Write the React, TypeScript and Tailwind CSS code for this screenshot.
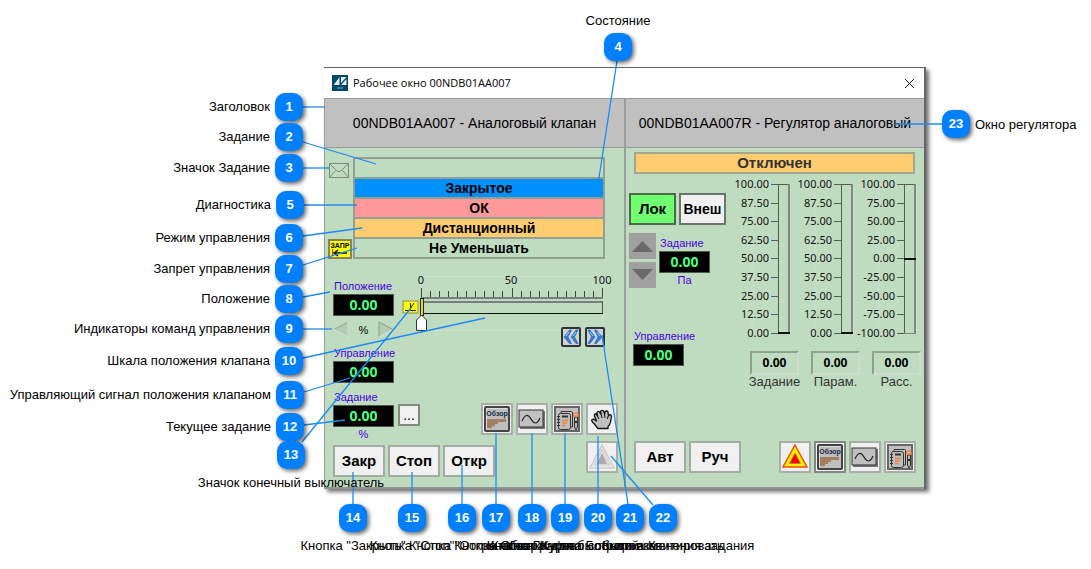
import type { ReactNode } from "react";
import { X } from "lucide-react";

type Side = "left" | "right" | "top" | "bottom";

interface Callout {
  n: number;
  x: number;
  y: number;
  text: string;
  side: Side;
  line: [number, number, number, number];
}

const callouts: Callout[] = [
  { n: 1, x: 289, y: 107, text: "Заголовок", side: "left", line: [303, 107, 325, 107] },
  { n: 2, x: 289, y: 137, text: "Задание", side: "left", line: [303, 142, 376, 164] },
  { n: 3, x: 289, y: 168, text: "Значок Задание", side: "left", line: [303, 168, 329, 168] },
  { n: 4, x: 618, y: 47, text: "Состояние", side: "top", line: [617, 61, 598, 184] },
  { n: 5, x: 290, y: 205, text: "Диагностика", side: "left", line: [304, 205, 357, 205] },
  { n: 6, x: 289, y: 238, text: "Режим управления", side: "left", line: [303, 236, 362, 228] },
  { n: 7, x: 289, y: 269, text: "Запрет управления", side: "left", line: [303, 265, 357, 248] },
  { n: 8, x: 289, y: 299, text: "Положение", side: "left", line: [303, 297, 330, 292] },
  { n: 9, x: 289, y: 329, text: "Индикаторы команд управления", side: "left", line: [303, 329, 332, 329] },
  { n: 10, x: 289, y: 361, text: "Шкала положения клапана", side: "left", line: [303, 358, 485, 318] },
  { n: 11, x: 290, y: 395, text: "Управляющий сигнал положения клапаном", side: "left", line: [304, 392, 350, 378] },
  { n: 12, x: 290, y: 427, text: "Текущее задание", side: "left", line: [304, 425, 345, 420] },
  { n: 13, x: 291, y: 455, text: "Значок конечный выключатель", side: "bottom", line: [302, 442, 411, 308] },
  { n: 14, x: 353, y: 518, text: 'Кнопка "Закрыть"', side: "bottom", line: [353, 504, 353, 472] },
  { n: 15, x: 412, y: 518, text: 'Кнопка "Стоп"', side: "bottom", line: [412, 504, 412, 472] },
  { n: 16, x: 462, y: 518, text: 'Кнопка "Открыть"', side: "bottom", line: [462, 504, 462, 465] },
  { n: 17, x: 496, y: 518, text: "Кнопка Обзор", side: "bottom", line: [496, 504, 496, 433] },
  { n: 18, x: 532, y: 518, text: "Кнопка График", side: "bottom", line: [532, 504, 532, 433] },
  { n: 19, x: 565, y: 518, text: "Кнопка Журнал событий", side: "bottom", line: [565, 504, 565, 433] },
  { n: 20, x: 598, y: 518, text: "Кнопка Блокировка", side: "bottom", line: [598, 504, 598, 436] },
  { n: 21, x: 630, y: 518, text: "Кнопки для быстрого изменения задания", side: "bottom", line: [628, 504, 602, 335] },
  { n: 22, x: 663, y: 518, text: "Кнопка Квитировать", side: "bottom", line: [653, 505, 611, 456] },
  { n: 23, x: 956, y: 124, text: "Окно регулятора", side: "right", line: [942, 124, 895, 124] },
];

const labelSide: Record<Side, string> = {
  left: "right-full mr-[5px] top-[6px]",
  right: "left-full ml-[5px] top-[7px]",
  top: "left-1/2 -translate-x-1/2 bottom-full mb-1",
  bottom: "left-1/2 -translate-x-1/2 top-full mt-1.5",
};

function Callouts() {
  return (
    <>
      <svg className="pointer-events-none absolute left-0 top-0" width="1091" height="569">
        {callouts.map(({ n, line: [x1, y1, x2, y2] }) => (
          <line key={n} x1={x1} y1={y1} x2={x2} y2={y2} stroke="#1c8af5" strokeWidth="1.3" />
        ))}
      </svg>
      {callouts.map((c) => (
        <div key={c.n} className="absolute h-7 w-7" style={{ left: c.x - 14, top: c.y - 14 }}>
          <span className="flex h-7 w-7 items-center justify-center rounded-[10px] bg-[#0080ff] text-[13px] font-bold text-white shadow-[2px_2px_4px_rgba(0,0,0,0.6)]">
            {c.n}
          </span>
          <span className={`absolute whitespace-nowrap text-[13px] leading-4 text-black ${labelSide[c.side]}`}>
            {c.text}
          </span>
        </div>
      ))}
    </>
  );
}

function Readout({ id, label, unit, wide }: { id: string; label: string; unit?: string; wide?: boolean }) {
  return (
    <div className={`flex flex-col ${wide ? "w-[61px]" : "w-[51px]"}`}>
      <label htmlFor={id} className="whitespace-nowrap pl-px text-[11px] leading-[14px] text-[#4a00e0]">
        {label}
      </label>
      <output
        id={id}
        className="mt-px flex h-[22px] items-center justify-center border border-[#4c5a4c] bg-black font-['Noto_Sans',sans-serif] text-sm font-bold text-[#4dff7c]"
      >
        0.00
      </output>
      {unit && <span className="text-center text-[11px] leading-[14px] text-[#4a00e0]">{unit}</span>}
    </div>
  );
}

function TextButton({ children }: { children: ReactNode }) {
  return (
    <button className="h-8 w-[52px] border-2 border-[#a3aba3] bg-[#f0f0f0] text-[15px] font-bold text-black">
      {children}
    </button>
  );
}

function IconButton({ label, active, children }: { label: string; active?: boolean; children: ReactNode }) {
  return (
    <button
      aria-label={label}
      className={`flex h-8 w-8 items-center justify-center border-2 bg-[#f0f0f0] ${active ? "border-[#858585]" : "border-[#a9aea9]"}`}
    >
      {children}
    </button>
  );
}

function OverviewIcon() {
  return (
    <svg width="28" height="28" viewBox="0 0 28 28">
      <rect x="2" y="2" width="24" height="24" rx="1" fill="#bebebe" stroke="#444" strokeWidth="2" />
      <path d="M3.5 24V3.5H24" fill="none" stroke="#ddd" />
      <text x="14" y="11" textAnchor="middle" fontSize="7" fontWeight="bold" fill="#132c42" fontFamily="Liberation Sans, sans-serif">
        Обзор
      </text>
      <path d="M4 14h19v3h-8v2h-3v2H9v2H4z" fill="#a47e60" />
    </svg>
  );
}

function TrendIcon() {
  return (
    <svg width="28" height="28" viewBox="0 0 28 28">
      <rect x="2" y="6" width="25" height="18" fill="#777" />
      <rect x="1" y="5" width="24" height="17" fill="#c0c0c0" stroke="#333" />
      <path d="M4 16C7 9 10 9 13 14s6 6 9-1" fill="none" stroke="#222" strokeWidth="1.2" />
    </svg>
  );
}

function JournalIcon() {
  return (
    <svg width="28" height="28" viewBox="0 0 28 28">
      <rect x="2" y="2" width="24" height="24" fill="#c0c0c0" stroke="#666" strokeWidth="2" />
      <rect x="5.500" y="8.500" width="12" height="16" rx="2" fill="#bdbdbd" stroke="#333" />
      <path d="M8 8V6.500h10.500q1 0 1 1V22H18" fill="none" stroke="#333" />
      <path d="M4 11.500h3M4 14.500h3M4 17.500h3M4 20.500h3" stroke="#333" />
      <path d="M9 11.500h6" stroke="#333" strokeWidth="2" />
      <path d="M9 15.500h6M9 18h5M9 20.500h3" stroke="#f58238" strokeWidth="1.300" />
      <path d="M21.500 12v10l1.500 3 1.500-3V12z" fill="#bbb" stroke="#333" />
      <path d="M21 17h4" stroke="#333" strokeWidth="2" />
      <path d="M20.500 11V9q2.500-2 4.500 0v2z" fill="#ccc" stroke="#f58238" strokeWidth="1.300" />
    </svg>
  );
}

function HandIcon() {
  return (
    <svg width="28" height="28" viewBox="0 0 28 28">
      <path
        d="M10 23.500L6 18.500Q3 16 4 14.500q2-1 4.500 1.500L6.500 11q-.5-2.500 1.500-2l1.500 2L9 8q.5-2.500 2.500-1L13 9l-.5-2.500q1-2 3-.5l1 3 .5-2q1.500-2 3 0l.5 4 .5-1q2-1 2.500 1.500L22.500 17q-.5 3-2.500 4.500v2z"
        fill="#c0c0c0"
        stroke="#111"
        strokeWidth="1.300"
        strokeLinejoin="round"
      />
      <path d="M9.500 11l1.500 3M13 9l1 4M16.500 9l.5 4M20 11l-.5 3" stroke="#111" fill="none" />
    </svg>
  );
}

function AlarmIcon({ muted }: { muted?: boolean }) {
  return muted ? (
    <svg width="28" height="28" viewBox="0 0 28 28">
      <path d="M14 2L26 25H2z" fill="#ececec" stroke="#ccc" strokeWidth="1.500" />
      <path d="M14 6L22 22H6z" fill="#dedede" stroke="#ccc" />
      <path d="M14 10L19 21H9z" fill="#aaa" />
    </svg>
  ) : (
    <svg width="28" height="28" viewBox="0 0 28 28">
      <path d="M14 2L26 24H2z" fill="#fff200" stroke="#f44a14" strokeWidth="1.500" />
      <path d="M14 10L19.500 20.500h-11z" fill="#f00" stroke="#b87333" strokeWidth="0.700" />
    </svg>
  );
}

function ChevronButton({ label, flip }: { label: string; flip?: boolean }) {
  return (
    <button aria-label={label} className="h-5 w-5 rounded-xs border-2 border-[#30343a] bg-[#d2d2d2]">
      <svg width="16" height="16" viewBox="0 0 16 16" className={flip ? "-scale-x-100" : ""}>
        <path d="M6.500 1h2L5 8l3.500 6.500h-2L1 8zM13 1h2l-3.500 7 3.500 6.500h-2L8 8z" fill="#2f7fd8" stroke="#1c5caf" strokeWidth="0.600" />
        <path d="M6 3L3 7M13 3l-3 4" stroke="#9fd2ff" />
      </svg>
    </button>
  );
}

function ValveScale() {
  const ticks = Array.from({ length: 21 }, (_, i) => i);
  return (
    <svg width="212" height="62" viewBox="0 0 212 62" className="block font-['Noto_Sans',sans-serif]">
      <path d="M20 5.500h181V59.500H20z" fill="none" stroke="#d0dfd0" />
      <g fontSize="11" textAnchor="middle" fill="#111">
        <text x="19" y="13">0</text>
        <text x="109" y="13">50</text>
        <text x="200" y="13">100</text>
      </g>
      {ticks.map((i) => (
        <line
          key={i}
          x1={Math.round(19 + i * 9.05) + 0.5}
          x2={Math.round(19 + i * 9.05) + 0.5}
          y1={i % 10 === 0 ? 17 : 20}
          y2="27"
          stroke="#3c4a3c"
          strokeWidth="1"
        />
      ))}
      <path d="M19 27H201" stroke="#77807a" strokeWidth="2" />
      <path d="M19 31H201" stroke="#77807a" strokeWidth="2" />
      <path d="M200.500 30V43" stroke="#555" />
      <path d="M19 42.500H201" stroke="#111" />
      <rect x="18.500" y="27.500" width="3" height="17" fill="#e8e000" stroke="#222" />
      <path d="M14.500 59.500V49L19.500 44l5 5v10.500z" fill="#fff" stroke="#333" />
      <rect x="1" y="30" width="15" height="12" fill="#ff0" stroke="#8c8c50" />
      <path d="M3 39.500h4L12 32M8.500 32v7.500H14" fill="none" stroke="#222" />
    </svg>
  );
}

function Gauge({ marks }: { marks: string[] }) {
  const bipolar = marks[8].startsWith("-");
  return (
    <svg width="61" height="164" viewBox="0 0 61 164" className="block overflow-visible font-['Noto_Sans',sans-serif]">
      <path d="M22 7.500H60.500V156.500H22z" fill="none" stroke="#cfdccf" />
      {marks.map((m, i) => (
        <g key={m}>
          <text x="39" y={11 + Math.round(i * 18.6)} textAnchor="end" fontSize="11" fill="#111">
            {m}
          </text>
          <line x1="41" x2="49" y1={7.5 + Math.round(i * 18.6)} y2={7.5 + Math.round(i * 18.6)} stroke="#526052" />
        </g>
      ))}
      <path d="M48.500 156V7.500H59" fill="none" stroke="#526052" />
      <path d="M59 7V157" stroke="#7d8a7d" strokeWidth="2" />
      <path d={bipolar ? "M48 82H60" : "M48 156H60"} stroke="#111" strokeWidth="2" />
      {bipolar && <path d="M48 156.500H60" stroke="#7d8a7d" />}
    </svg>
  );
}

const percentMarks = ["100.00", "87.50", "75.00", "62.50", "50.00", "37.50", "25.00", "12.50", "0.00"];
const errorMarks = ["100.00", "75.00", "50.00", "25.00", "0.00", "-25.00", "-50.00", "-75.00", "-100.00"];

const statusRows = [
  { text: "", color: "" },
  { text: "Закрытое", color: "bg-[#0091ff]" },
  { text: "ОК", color: "bg-[#ff9999]" },
  { text: "Дистанционный", color: "bg-[#ffcc70]" },
  { text: "Не Уменьшать", color: "" },
];

function ValvePanel() {
  return (
    <section className="flex flex-col border-l border-[#999f99]">
      <h2 className="flex h-[50px] items-center justify-center border-y border-[#999] bg-[#c0c0c0] text-sm">
        00NDB01AA007 - Аналоговый клапан
      </h2>
      <div className="flex pl-[3px] pr-[19px] pt-[9px]">
        <div className="flex w-[25px] flex-col justify-between pt-[5px]">
          <svg width="22" height="17" viewBox="0 0 22 17" className="block">
            <path d="M1.500 1.500h19v14h-19zM1.500 1.500l7 7q2.500 2.500 5 0l7-7M1.500 15.500l6-7M20.500 15.500l-6-7" fill="none" stroke="#7f8b7f" />
          </svg>
          <svg width="24" height="20" viewBox="0 0 24 20" className="block">
            <rect x="1" y="1" width="22" height="18" fill="#ff0" stroke="#85855a" strokeWidth="2" />
            <text x="12" y="9" textAnchor="middle" fontSize="7" fontWeight="bold" fontFamily="Liberation Sans, sans-serif">
              ЗАПР
            </text>
            <path d="M4.500 10v7" stroke="#e02020" />
            <path d="M6 14h13M10 11l-4 3 4 3" fill="none" stroke="#111" strokeWidth="1.500" />
          </svg>
        </div>
        <ul className="flex-1 border-x-2 border-b-2 border-[#92a092]">
          {statusRows.map((row, i) => (
            <li key={i} className={`h-5 border-t-2 border-[#92a092] text-center text-sm font-bold leading-[18px] ${row.color}`}>
              {row.text}
            </li>
          ))}
        </ul>
      </div>
      <div className="flex justify-between pl-2 pr-[10px]">
        <div className="flex flex-col gap-2 pt-5">
          <div>
            <Readout id="position" label="Положение" wide />
            <div className="flex items-center justify-between pt-[5px] text-[11px] leading-4">
              <svg width="16" height="17" viewBox="0 0 16 17">
                <path d="M15 1v15L1 8.500z" fill="#b2ceb2" stroke="#93a793" />
                <path d="M1 8.500L15 16V1" fill="none" stroke="#e8f0e8" />
              </svg>
              %
              <svg width="16" height="17" viewBox="0 0 16 17">
                <path d="M1 1v15L15 8.500z" fill="#b2ceb2" stroke="#8a9c8a" />
                <path d="M1 16L15 8.500" fill="none" stroke="#e8f0e8" />
              </svg>
            </div>
          </div>
          <Readout id="control" label="Управление" wide />
        </div>
        <div className="flex flex-col items-end pt-3">
          <ValveScale />
          <div className="-mt-1.5 flex gap-1 pr-[9px]">
            <ChevronButton label="Быстро уменьшить" />
            <ChevronButton label="Быстро увеличить" flip />
          </div>
        </div>
      </div>
      <div className="flex items-start justify-between pl-2 pr-1.5 pt-[7px]">
        <div className="flex items-start gap-1">
          <Readout id="task" label="Задание" unit="%" wide />
          <button className="mt-[14px] h-[22px] w-[22px] border-2 border-[#828a82] bg-[#f0f0f0] text-sm leading-4">...</button>
        </div>
        <div className="flex gap-[3px] pt-[13px]">
          <IconButton label="Обзор"><OverviewIcon /></IconButton>
          <IconButton label="График"><TrendIcon /></IconButton>
          <IconButton label="Журнал"><JournalIcon /></IconButton>
          <IconButton label="Блокировка"><HandIcon /></IconButton>
        </div>
      </div>
      <div className="flex items-end justify-between pl-2 pr-1.5">
        <div className="-mb-1 flex gap-[3px]">
          <TextButton>Закр</TextButton>
          <TextButton>Стоп</TextButton>
          <TextButton>Откр</TextButton>
        </div>
        <IconButton label="Квитировать"><AlarmIcon muted /></IconButton>
      </div>
    </section>
  );
}

function RegulatorPanel() {
  return (
    <section className="flex flex-col border-l-2 border-[#999f99]">
      <h2 className="flex h-[50px] items-center justify-center border-y border-[#999] bg-[#c0c0c0] text-sm whitespace-nowrap">
        00NDB01AA007R - Регулятор аналоговый
      </h2>
      <p className="ml-2 mr-[9px] mt-1 h-[22px] border-2 border-[#a3a890] bg-[#ffcc70] text-center text-[15px] font-bold leading-[18px] text-[#333]">
        Отключен
      </p>
      <div className="flex justify-between pr-[7px]">
        <div className="flex flex-col pl-[3px] pt-[19px]">
          <div className="flex gap-[3px]">
            <button className="h-8 w-[47px] border-2 border-[#4b6b4b] bg-[#70ff70] text-[15px] font-bold">Лок</button>
            <button className="h-8 w-[47px] border-2 border-[#6c756c] bg-[#f0f0f0] text-sm font-bold">Внеш</button>
          </div>
          <div className="flex gap-[3px] pt-2">
            <div className="flex flex-col gap-[3px]">
              <button aria-label="Увеличить задание" className="flex h-[26px] w-[27px] items-center justify-center bg-[#a0a0a0]">
                <svg width="21" height="12" viewBox="0 0 21 12"><path d="M0 12L10.500 1 21 12z" fill="#696969" /></svg>
              </button>
              <button aria-label="Уменьшить задание" className="flex h-[26px] w-[27px] items-center justify-center bg-[#a0a0a0]">
                <svg width="21" height="12" viewBox="0 0 21 12"><path d="M0 0h21L10.500 11z" fill="#696969" /></svg>
              </button>
            </div>
            <div className="pt-[3px]">
              <Readout id="reg-task" label="Задание" unit="Па" />
            </div>
          </div>
          <div className="pl-1 pt-[41px]">
            <Readout id="reg-control" label="Управление" />
          </div>
        </div>
        <div className="flex gap-[2px] pt-[3px]">
          <Gauge marks={percentMarks} />
          <Gauge marks={percentMarks} />
          <Gauge marks={errorMarks} />
        </div>
      </div>
      <div className="-mt-[15px] flex justify-end gap-3 pr-[3px]">
        {["Задание", "Парам.", "Расс."].map((name) => (
          <div key={name} className="flex w-[49px] flex-col items-center">
            <output
              aria-label={name}
              className="flex h-6 w-full items-center justify-center border-2 border-b-[#cfdccf] border-l-[#8fa08f] border-r-[#cfdccf] border-t-[#8fa08f] font-['Noto_Sans',sans-serif] text-xs font-bold"
            >
              0.00
            </output>
            <span className="text-[13px] leading-[14px] text-[#333]">{name}</span>
          </div>
        ))}
      </div>
      <div className="mt-auto flex items-center justify-between pb-[14px] pl-2 pr-2">
        <div className="flex gap-[3px]">
          <TextButton>Авт</TextButton>
          <TextButton>Руч</TextButton>
        </div>
        <div className="flex gap-[3px]">
          <IconButton label="Тревога"><AlarmIcon /></IconButton>
          <IconButton label="Обзор" active><OverviewIcon /></IconButton>
          <IconButton label="График"><TrendIcon /></IconButton>
          <IconButton label="Журнал"><JournalIcon /></IconButton>
        </div>
      </div>
    </section>
  );
}

export default function App() {
  return (
    <main className="relative min-h-screen bg-white pl-[324px] pt-[67px] font-['Liberation_Sans',Arial,sans-serif] text-black">
      <div className="max-w-[602px] border-r-2 border-t border-[#666] bg-[#c0dcc0] shadow-[3px_3px_4px_rgba(0,0,0,0.55)]">
        <header className="flex h-[30px] items-center justify-between bg-white pl-2 pr-1.5">
          <div className="flex items-center gap-[5px] font-['Open_Sans',sans-serif] text-[11px]">
            <svg width="16" height="16" viewBox="0 0 16 16">
              <rect width="16" height="16" fill="#00486b" />
              <path d="M2 9.500L7.500 2v8H2zM9 2h5.500L9 8zM9 10l5.500-6v6z" fill="#e6eef3" />
              <path d="M5 13h6" stroke="#8fb0c4" />
            </svg>
            <h1>Рабочее окно 00NDB01AA007</h1>
          </div>
          <button aria-label="Закрыть окно">
            <X size={17} strokeWidth={1.3} />
          </button>
        </header>
        <div className="grid min-h-[391px] grid-cols-2 border-b-2 border-[#8f968f]">
          <ValvePanel />
          <RegulatorPanel />
        </div>
      </div>
      <Callouts />
    </main>
  );
}
